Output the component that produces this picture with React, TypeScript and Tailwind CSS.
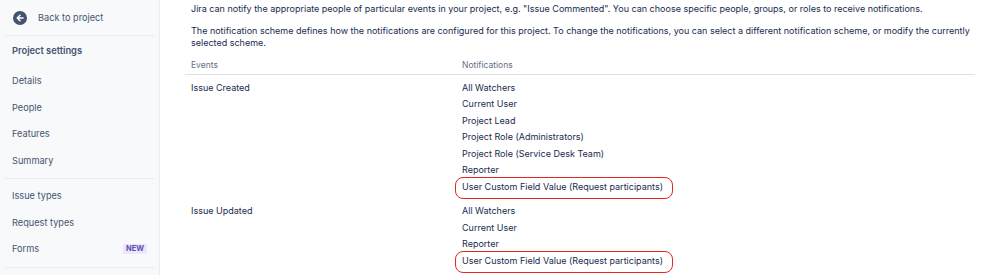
import React from "react";

const font = { fontFamily: "Inter, 'Noto Sans', sans-serif" };

function NavItem({ label, badge }: { label: string; badge?: string }) {
  return (
    <div className="flex h-[26.5px] items-center justify-between pl-[12px] pr-[12px] text-[9.2px] text-[#44546f]">
      <span>{label}</span>
      {badge && (
        <span className="rounded-[2px] bg-[#ece5fb] px-[3px] text-[7.5px] font-bold leading-[10px] text-[#5e4db2]">
          {badge}
        </span>
      )}
    </div>
  );
}

function Row({ event, items, circled }: { event: string; items: string[]; circled: number }) {
  return (
    <div className="flex pb-[5px] pt-[3px]">
      <div className="w-[277px] pl-[6px] text-[9px] leading-[16.5px] text-[#172b4d]">{event}</div>
      <div className="flex flex-col">
        {items.map((it, i) => (
          <div key={i} className="relative text-[9px] leading-[16.5px] text-[#172b4d]">
            {i === circled && (
              <span className="absolute left-[-7px] top-[-2px] h-[22px] w-[218px] rounded-[8px] border-[1.5px] border-[#e5261f]" />
            )}
            <span className="relative">{it}</span>
          </div>
        ))}
      </div>
    </div>
  );
}

export default function App() {
  return (
    <div className="flex h-[275px] w-[999px] overflow-hidden bg-white" style={font}>
      <aside className="flex w-[160px] shrink-0 flex-col border-r border-[#ebecf0] bg-[#f8f9fb]">
        <div className="flex h-[35px] items-center pl-[13px] pt-[1px]">
          <svg width="14" height="14" viewBox="0 0 14 14">
            <circle cx="7" cy="7" r="7" fill="#44546f" />
            <path d="M10 7H4.5M7 4.3L4.3 7L7 9.7" stroke="white" strokeWidth="1.6" fill="none" strokeLinecap="round" strokeLinejoin="round" />
          </svg>
          <span className="ml-[11px] text-[9.2px] text-[#44546f]">Back to project</span>
        </div>
        <div className="mx-[5px] h-px bg-[#e9ebee]" />
        <div className="flex h-[29px] items-center pl-[12px] text-[9.3px] font-semibold text-[#44546f]">Project settings</div>
        <div className="h-[3px]" />
        <NavItem label="Details" />
        <NavItem label="People" />
        <NavItem label="Features" />
        <NavItem label="Summary" />
        <div className="mx-[5px] my-[4px] h-px bg-[#e9ebee]" />
        <NavItem label="Issue types" />
        <NavItem label="Request types" />
        <NavItem label="Forms" badge="NEW" />
        <div className="mx-[5px] mt-[4px] h-px bg-[#e9ebee]" />
      </aside>
      <main className="flex-1 pl-[31px] pr-[24px]">
        <p className="mt-[1.5px] text-[9px] leading-[13px] text-[#172b4d]">
          Jira can notify the appropriate people of particular events in your project, e.g. "Issue Commented". You can choose specific people, groups, or roles to receive notifications.
        </p>
        <p className="mt-[10px] text-[9px] leading-[12.5px] text-[#172b4d]">
          The notification scheme defines how the notifications are configured for this project. To change the notifications, you can select a different notification scheme, or modify the currently selected scheme.
        </p>
        <div className="ml-[-6px] mt-[9px] w-[790px]">
          <div className="flex border-b-[1.5px] border-[#dfe1e6] pb-[2.5px] text-[8.5px] text-[#626f86]">
            <div className="w-[277px] pl-[6px]">Events</div>
            <div>Notifications</div>
          </div>
          <div className="pt-[2px]">
            <Row
              event="Issue Created"
              circled={6}
              items={[
                "All Watchers",
                "Current User",
                "Project Lead",
                "Project Role (Administrators)",
                "Project Role (Service Desk Team)",
                "Reporter",
                "User Custom Field Value (Request participants)",
              ]}
            />
            <Row
              event="Issue Updated"
              circled={3}
              items={["All Watchers", "Current User", "Reporter", "User Custom Field Value (Request participants)"]}
            />
          </div>
        </div>
      </main>
    </div>
  );
}
